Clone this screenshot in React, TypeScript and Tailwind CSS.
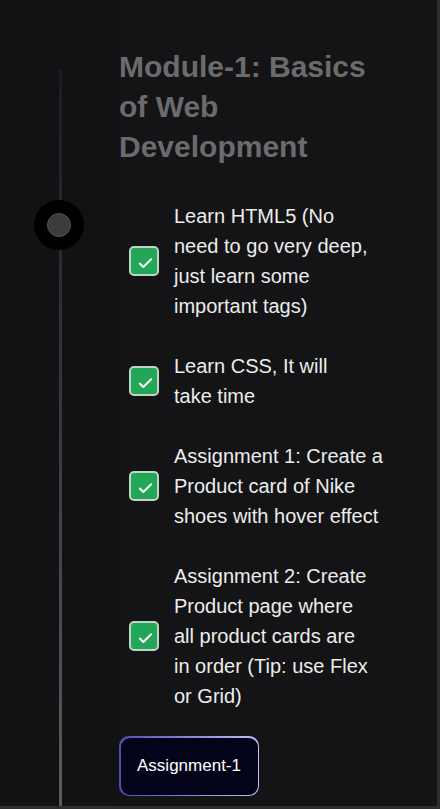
import { Check } from 'lucide-react';

const tasks = [
  'Learn HTML5 (No need to go very deep, just learn some important tags)',
  'Learn CSS, It will take time',
  'Assignment 1: Create a Product card of Nike shoes with hover effect',
  'Assignment 2: Create Product page where all product cards are in order (Tip: use Flex or Grid)',
];

export default function App() {
  return (
    <div className="w-[440px] h-[809px] overflow-hidden bg-[#141416] border-r-[3px] border-b-[3px] border-[#2e2e30] font-['Liberation_Sans',Arial,sans-serif]">
      <div className="flex h-full">
        <div className="relative w-[119px] shrink-0 bg-[#121214]">
          <div className="absolute left-[59px] top-[70px] bottom-0 w-[3px] bg-gradient-to-b from-[#1a1c26] to-[#5c5c5e]" />
          <div className="absolute left-[34px] top-[200px] w-[50px] h-[50px] rounded-full bg-black flex items-center justify-center">
            <div className="w-[24px] h-[24px] rounded-full bg-[#3c3c3e] border border-[#555]" />
          </div>
        </div>

        <div className="flex-1 pt-[47px]">
          <h2 className="text-[30px] leading-[40px] font-bold text-[#6b6b6d] w-[260px]">
            Module-1: Basics of Web Development
          </h2>

          <div className="mt-[34px] flex flex-col gap-[30px]">
            {tasks.map((task, i) => (
              <div key={i} className="flex items-center gap-[15px] pl-[10px]">
                <div className="w-[30px] h-[30px] shrink-0 rounded-[5px] bg-[#22a759] border-2 border-[#bfd6c6] flex items-center justify-center">
                  <Check className="w-[17px] h-[17px] text-white mt-[5px] ml-[2px]" strokeWidth={2.75} />
                </div>
                <div className="w-[209px] text-[20px] leading-[30px] text-[#ececec] text-pretty">{task}</div>
              </div>
            ))}
          </div>

          <div className="mt-[25px] w-[140px] h-[60px] rounded-[10px] p-[1.5px] bg-gradient-to-r from-[#534cae] to-[#c6bff2]">
            <button className="w-full h-full rounded-[9px] bg-[#03041a] text-white text-[17px]">
              Assignment-1
            </button>
          </div>
        </div>
      </div>
    </div>
  );
}
